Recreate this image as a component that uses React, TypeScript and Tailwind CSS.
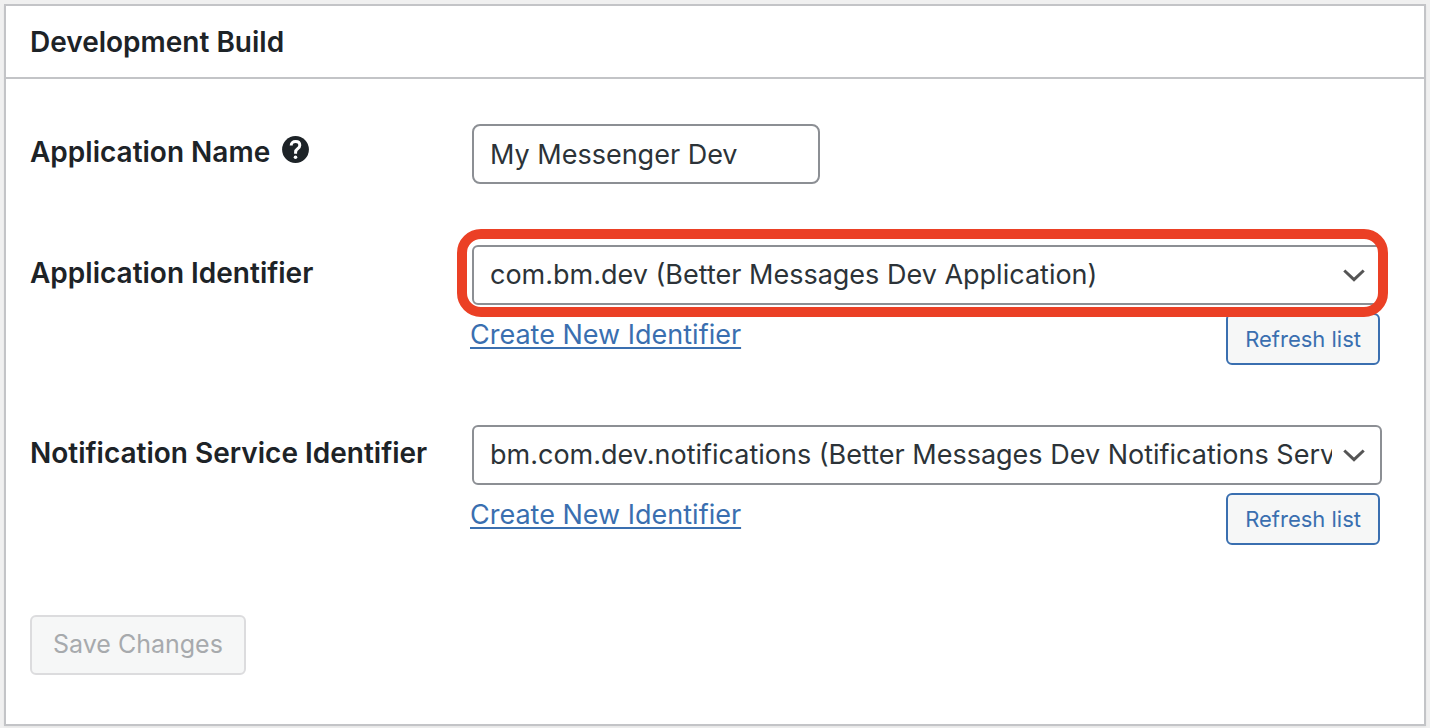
import React from 'react';

interface IdentifierFieldProps {
  id: string;
  label: string;
  value: string;
  highlighted?: boolean;
}

const HelpIcon = () => (
  <svg viewBox="0 0 27 27" className="size-[27px]" fill="none" aria-hidden="true">
    <circle cx="13.5" cy="13.5" r="13.4" fill="#1d2327" />
    <path
      d="M9.2 9.6C9.2 6.9 11 5.4 13.6 5.4s4.2 1.5 4.2 3.8c0 1.7-.9 2.6-2.2 3.6-1.4 1-2 1.8-2 3.4v1.6"
      stroke="#fff"
      strokeWidth="3"
    />
    <circle cx="13.5" cy="21.3" r="1.8" fill="#fff" />
  </svg>
);

const ChevronIcon = () => (
  <svg
    viewBox="0 0 22 13"
    className="pointer-events-none absolute top-6 right-[17px] h-[13px] w-[22px]"
    fill="none"
    aria-hidden="true"
  >
    <path d="M1.3 1.5 11 10.7l9.7-9.2" stroke="#555" strokeWidth="3" />
  </svg>
);

const IdentifierField = ({ id, label, value, highlighted }: IdentifierFieldProps) => {
  return (
    <div className="grid grid-cols-[440px_1fr]">
      <label htmlFor={id} className="pt-2 text-[28px] leading-10 font-semibold whitespace-nowrap">
        {label}
      </label>
      <div className="min-w-0">
        <div className="relative ml-0.5 -mr-0.5">
          <select
            id={id}
            defaultValue={value}
            className="block h-[60px] w-full appearance-none rounded-md border-2 border-[#8c8f94] bg-white pr-12 pl-4 text-[27px] text-[#2c3338]"
          >
            <option value={value}>{value}</option>
          </select>
          <ChevronIcon />
          {highlighted && (
            <div className="pointer-events-none absolute -top-4 -right-1.5 -bottom-3 -left-[15px] z-10 rounded-3xl border-10 border-[#eb4025]" />
          )}
        </div>
        <div className="flex items-start justify-between pt-2">
          <a
            href="#"
            className="pt-0.5 text-[27px] leading-10 text-[#3a6fb0] underline decoration-2 underline-offset-3"
          >
            Create New Identifier
          </a>
          <button
            type="button"
            className="h-[52px] rounded-md border-2 border-[#3a6fb0] bg-[#f6f7f7] px-[17px] text-[22px] text-[#3a6fb0]"
          >
            Refresh list
          </button>
        </div>
      </div>
    </div>
  );
};

export default function App() {
  return (
    <div className="min-h-screen bg-[#f0f0f0] px-1 pt-1 pb-0.5 font-['Inter',sans-serif] text-[#1d2327]">
      <section className="border-2 border-[#c3c4c7] bg-white shadow-xs">
        <h2 className="border-b-2 border-[#c3c4c7] px-6 pt-4 pb-[15px] text-[28px] leading-10 font-semibold">
          Development Build
        </h2>
        <form className="pt-[45px] pr-11 pb-[49px] pl-6">
          <div className="grid grid-cols-[440px_1fr]">
            <div className="flex items-start gap-3 pt-2">
              <label htmlFor="app-name" className="text-[28px] leading-10 font-semibold">
                Application Name
              </label>
              <button type="button" aria-label="Help" className="pt-1">
                <HelpIcon />
              </button>
            </div>
            <input
              id="app-name"
              type="text"
              defaultValue="My Messenger Dev"
              className="ml-0.5 h-[60px] w-[348px] rounded-lg border-2 border-[#8c8f94] bg-white px-4 text-[27px] text-[#2c3338]"
            />
          </div>
          <div className="mt-[61px] flex flex-col gap-[60px]">
            <IdentifierField
              id="app-identifier"
              label="Application Identifier"
              value="com.bm.dev (Better Messages Dev Application)"
              highlighted
            />
            <IdentifierField
              id="notification-identifier"
              label="Notification Service Identifier"
              value="bm.com.dev.notifications (Better Messages Dev Notifications Service)"
            />
          </div>
          <button
            type="submit"
            disabled
            className="mt-[70px] block h-[60px] rounded-md border-2 border-[#dcdcde] bg-[#f6f7f7] px-[21px] text-[25px] text-[#a7aaad]"
          >
            Save Changes
          </button>
        </form>
      </section>
    </div>
  );
}
